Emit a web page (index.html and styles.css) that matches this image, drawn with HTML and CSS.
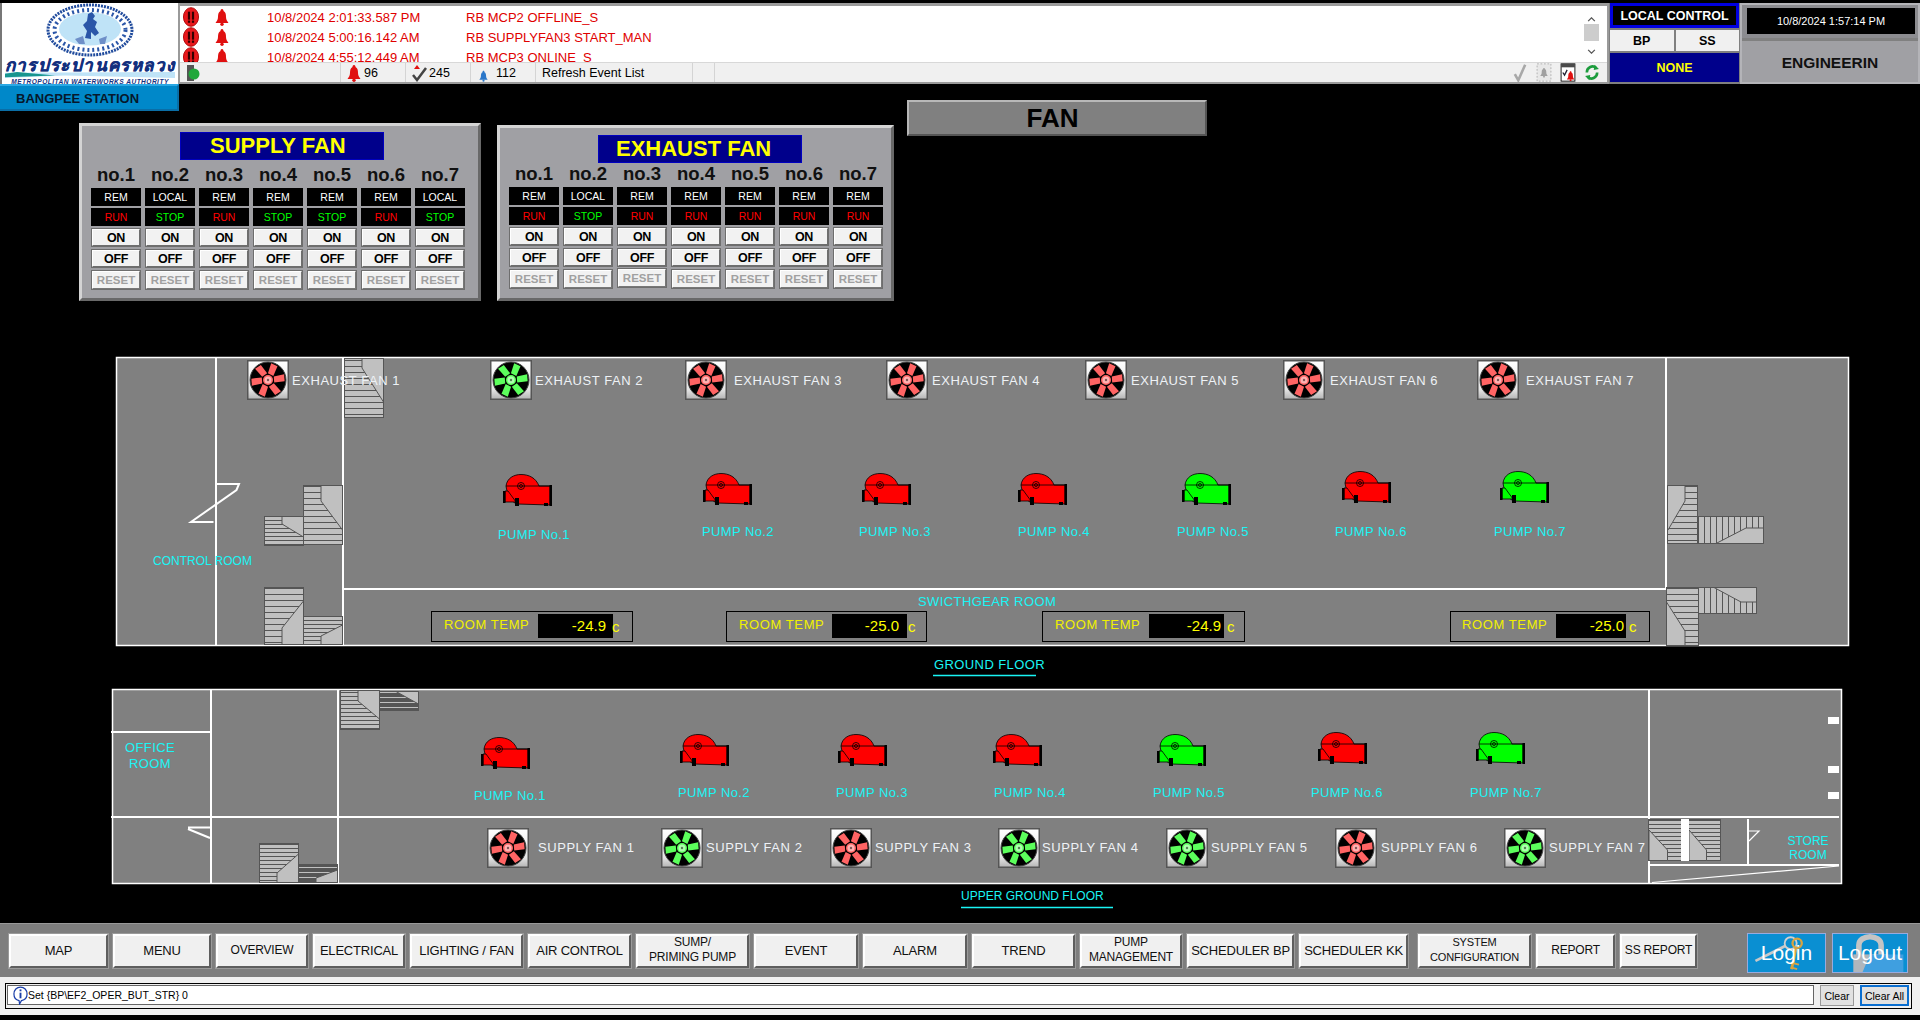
FILE: index.html
```
<!DOCTYPE html>
<html lang="en">
<head>
<meta charset="utf-8">
<title>Fan - Bangpee Station</title>
<link rel="stylesheet" href="styles.css">
</head>
<body>
<svg class="defs" width="0" height="0" aria-hidden="true">
  <defs>
    <linearGradient id="fanbg" x1="0" y1="0" x2="0" y2="1"><stop offset="0" stop-color="#ffffff"/><stop offset=".75" stop-color="#e4e4e4"/><stop offset="1" stop-color="#b4b4b4"/></linearGradient>
    <pattern id="h6" width="8" height="6" patternUnits="userSpaceOnUse"><rect width="8" height="6" fill="#c0c0c0"/><rect width="8" height="1" fill="#555"/></pattern>
    <pattern id="h4" width="8" height="4" patternUnits="userSpaceOnUse"><rect width="8" height="4" fill="#c0c0c0"/><rect width="8" height="1" fill="#555"/></pattern>
    <pattern id="v6" width="6" height="8" patternUnits="userSpaceOnUse"><rect width="6" height="8" fill="#c0c0c0"/><rect width="1" height="8" fill="#555"/></pattern>
    <pattern id="hd" width="8" height="5" patternUnits="userSpaceOnUse"><rect width="8" height="5" fill="#555"/><rect y="2" width="8" height="1" fill="#c0c0c0"/></pattern>
    <symbol id="fan" viewBox="0 0 42 40">
      <rect x=".75" y=".75" width="40.5" height="38.5" fill="url(#fanbg)" stroke="#555" stroke-width="1.5"/>
      <circle cx="21" cy="20" r="18" fill="#000" stroke="#444" stroke-width="1"/>
      <g fill="currentColor" transform="rotate(-4 21 20)">
        <polygon points="27,17 37.500,15.500 37.500,22.500 27,23"/>
        <polygon points="27,17 37.500,15.500 37.500,22.500 27,23" transform="rotate(-60 21 20)"/>
        <polygon points="27,17 37.500,15.500 37.500,22.500 27,23" transform="rotate(-120 21 20)"/>
        <polygon points="27,17 37.500,15.500 37.500,22.500 27,23" transform="rotate(180 21 20)"/>
        <polygon points="27,17 37.500,15.500 37.500,22.500 27,23" transform="rotate(120 21 20)"/>
        <polygon points="27,17 37.500,15.500 37.500,22.500 27,23" transform="rotate(60 21 20)"/>
      </g>
      <circle cx="21" cy="20" r="5" fill="currentColor"/>
      <circle cx="21" cy="20" r="3.500" fill="#fff" fill-opacity=".5"/>
      <circle cx="21" cy="20" r="1.200" fill="#000" fill-opacity=".5"/>
    </symbol>
    <symbol id="pump" viewBox="0 0 49 33">
      <path d="M3 12C4 4 11 .5 18 .5C26 .5 33 4 36 12H47V31L14 30C8 28 4 20 3 12Z" fill="currentColor" stroke="#000" stroke-width=".8"/>
      <path d="M5 17L13 28H2V17Z" fill="currentColor" stroke="#000" stroke-width=".8"/>
      <path d="M3 12H47" stroke="#000" stroke-width=".8" fill="none"/>
      <rect x="46.500" y="11" width="2.500" height="21" fill="#000"/>
      <rect y="17" width="2.500" height="12" fill="#000"/>
      <rect x="12" y="24" width="4" height="8" fill="#000"/>
      <rect x="41" y="29" width="4" height="3" fill="#000"/>
      <circle cx="18" cy="12" r="3.500" fill="none" stroke="#000" stroke-width=".8"/>
      <circle cx="18" cy="12" r="1.500" fill="none" stroke="#000" stroke-width=".8"/>
    </symbol>
    <symbol id="bell" viewBox="0 0 14 18">
      <path d="M7 1C8.200 1 8.500 2 8.500 3C10.500 4 11 6 11 9C11 12 12.500 13.500 13.500 15H.5C1.500 13.500 3 12 3 9C3 6 3.500 4 5.500 3C5.500 2 5.800 1 7 1Z" fill="currentColor"/>
      <circle cx="7" cy="16.300" r="1.700" fill="currentColor"/>
    </symbol>
    <symbol id="alert" viewBox="0 0 18 22">
      <ellipse cx="9" cy="11" rx="8.500" ry="10.500" fill="#e8181c" stroke="#a00"/>
      <rect x="5.500" y="5" width="2.500" height="9" fill="#300"/>
      <rect x="10" y="5" width="2.500" height="9" fill="#300"/>
      <rect x="5.500" y="15" width="2.500" height="2.500" fill="#300"/>
      <rect x="10" y="15" width="2.500" height="2.500" fill="#300"/>
    </symbol>
  </defs>
</svg>

<header class="topbar">
  <div class="logo">
    <svg class="seal" viewBox="0 0 90 54" aria-hidden="true">
      <ellipse cx="45" cy="27" rx="42" ry="25" class="seal-ring"/>
      <ellipse cx="45" cy="27" rx="35.500" ry="20" class="seal-dots"/>
      <ellipse cx="45" cy="26" rx="31" ry="16.500" class="seal-in"/>
      <path d="M43 11L47 9L50 13L48 16L52 19L50 24L54 30L50 33L46 29L46 36L40 35L42 28L38 22L42 18Z" class="seal-fig"/>
      <path d="M30 36L38 33L40 41L34 41ZM54 36L62 33L60 41L55 41Z" class="seal-fig-l"/>
    </svg>
    <div class="logo-th">การประปานครหลวง</div>
    <svg class="swoosh" viewBox="0 0 170 7" preserveAspectRatio="none" aria-hidden="true"><polygon points="0,1 170,0 170,7 60,4 0,7" class="sw-light"/><polygon points="0,2 12,0 50,4 0,6" class="sw-teal"/></svg>
    <div class="logo-en">METROPOLITAN WATERWORKS AUTHORITY</div>
  </div>

  <section class="events">
    <div class="event-body">
      <div class="event-list">
        <div class="event-row"><svg class="ic-alert"><use href="#alert"/></svg><svg class="ic-bell"><use href="#bell"/></svg><span class="ev-date">10/8/2024 2:01:33.587 PM</span><span>RB MCP2 OFFLINE_S</span></div>
        <div class="event-row"><svg class="ic-alert"><use href="#alert"/></svg><svg class="ic-bell"><use href="#bell"/></svg><span class="ev-date">10/8/2024 5:00:16.142 AM</span><span>RB SUPPLYFAN3 START_MAN</span></div>
        <div class="event-row"><svg class="ic-alert"><use href="#alert"/></svg><svg class="ic-bell"><use href="#bell"/></svg><span class="ev-date">10/8/2024 4:55:12.449 AM</span><span>RB MCP3 ONLINE_S</span></div>
      </div>
      <div class="scrollbar">
        <svg class="chev" viewBox="0 0 10 6"><path d="M1 5L5 1L9 5" class="chev-line"/></svg>
        <div class="thumb"></div>
        <svg class="chev chev-down" viewBox="0 0 10 6"><path d="M1 1L5 5L9 1" class="chev-line"/></svg>
      </div>
    </div>
    <div class="statusbar">
      <div class="cell cell-light"><svg class="ic-light" viewBox="0 0 14 18"><rect x="1" y="1" width="7" height="16" class="light-box"/><circle cx="8" cy="10" r="5.500" class="light-on"/></svg></div>
      <div class="cell cell-a"><svg class="ic-bell-sm red"><use href="#bell"/></svg>96</div>
      <div class="cell cell-a"><svg class="ic-ack" viewBox="0 0 16 18"><path d="M1 11L5 16L14 4" class="ack-line"/><path d="M5 1L8 5H2Z" class="ack-red"/></svg>245</div>
      <div class="cell cell-a"><svg class="ic-bell-xs blue"><use href="#bell"/></svg>112</div>
      <div class="cell cell-refresh">Refresh Event List</div>
      <div class="cell cell-gap"></div>
      <div class="tools">
        <svg class="tool" viewBox="0 0 18 22"><path d="M3 13L7 20L15 2" class="tool-check"/></svg>
        <svg class="tool tool-dash" viewBox="0 0 18 22"><rect x="1" y="1" width="16" height="20" class="tool-frame"/><use href="#bell" x="4" y="5" width="10" height="12" class="grey"/></svg>
        <svg class="tool" viewBox="0 0 18 22"><rect x="1" y="1" width="16" height="20" class="tool-win"/><rect x="1" y="1" width="16" height="4" class="tool-bar"/><path d="M3 11L5 14L8 8" class="tool-ack"/><use href="#bell" x="7" y="9" width="10" height="12" class="red"/></svg>
        <svg class="tool" viewBox="0 0 18 22"><path d="M3 11A6.500 7 0 0 1 14 6M15 11A6.500 7 0 0 1 4 16" class="tool-ref"/><path d="M12 2L17 7L11 8ZM6 20L1 15L7 14Z" class="tool-ref-a"/></svg>
      </div>
    </div>
  </section>

  <section class="control">
    <div class="ctl-title">LOCAL CONTROL</div>
    <div class="ctl-btns"><div class="ctl-btn">BP</div><div class="ctl-btn">SS</div></div>
    <div class="ctl-none">NONE</div>
  </section>

  <section class="session">
    <div class="clock-wrap"><div class="clock">10/8/2024 1:57:14 PM</div></div>
    <div class="user">ENGINEERIN</div>
  </section>
</header>

<main class="workspace">
  <div class="station">BANGPEE STATION</div>
  <div class="panels">
    <section class="panel panel-supply">
      <h2 class="panel-title">SUPPLY FAN</h2>
      <div class="fan-grid">
        <div class="no">no.1</div><div class="no">no.2</div><div class="no">no.3</div><div class="no">no.4</div><div class="no">no.5</div><div class="no">no.6</div><div class="no">no.7</div>
        <div class="mode">REM</div><div class="mode">LOCAL</div><div class="mode">REM</div><div class="mode">REM</div><div class="mode">REM</div><div class="mode">REM</div><div class="mode">LOCAL</div>
        <div class="state run">RUN</div><div class="state stop">STOP</div><div class="state run">RUN</div><div class="state stop">STOP</div><div class="state stop">STOP</div><div class="state run">RUN</div><div class="state stop">STOP</div>
        <div class="btn">ON</div><div class="btn">ON</div><div class="btn">ON</div><div class="btn">ON</div><div class="btn">ON</div><div class="btn">ON</div><div class="btn">ON</div>
        <div class="btn">OFF</div><div class="btn">OFF</div><div class="btn">OFF</div><div class="btn">OFF</div><div class="btn">OFF</div><div class="btn">OFF</div><div class="btn">OFF</div>
        <div class="btn reset">RESET</div><div class="btn reset">RESET</div><div class="btn reset">RESET</div><div class="btn reset">RESET</div><div class="btn reset">RESET</div><div class="btn reset">RESET</div><div class="btn reset">RESET</div>
      </div>
    </section>
    <section class="panel panel-exhaust">
      <h2 class="panel-title">EXHAUST FAN</h2>
      <div class="fan-grid">
        <div class="no">no.1</div><div class="no">no.2</div><div class="no">no.3</div><div class="no">no.4</div><div class="no">no.5</div><div class="no">no.6</div><div class="no">no.7</div>
        <div class="mode">REM</div><div class="mode">LOCAL</div><div class="mode">REM</div><div class="mode">REM</div><div class="mode">REM</div><div class="mode">REM</div><div class="mode">REM</div>
        <div class="state run">RUN</div><div class="state stop">STOP</div><div class="state run">RUN</div><div class="state run">RUN</div><div class="state run">RUN</div><div class="state run">RUN</div><div class="state run">RUN</div>
        <div class="btn">ON</div><div class="btn">ON</div><div class="btn">ON</div><div class="btn">ON</div><div class="btn">ON</div><div class="btn">ON</div><div class="btn">ON</div>
        <div class="btn">OFF</div><div class="btn">OFF</div><div class="btn">OFF</div><div class="btn">OFF</div><div class="btn">OFF</div><div class="btn">OFF</div><div class="btn">OFF</div>
        <div class="btn reset">RESET</div><div class="btn reset">RESET</div><div class="btn reset raised">RESET</div><div class="btn reset">RESET</div><div class="btn reset">RESET</div><div class="btn reset">RESET</div><div class="btn reset">RESET</div>
      </div>
    </section>
    <h1 class="page-title">FAN</h1>
  </div>

  <svg class="plan" viewBox="0 340 1920 583" width="1920" height="583">
    <!-- Ground floor -->
    <rect x="116.500" y="357.500" width="1732" height="288" class="floor"/>
    <path d="M216 357V646M343 357V646M343 589H1666M1666 357V589" class="wall"/>
    <polyline points="216,484 239,484 236.500,490 191,522 213.500,522" class="door"/>

    <rect x="344.500" y="358.500" width="39" height="59" fill="url(#h6)" class="stair"/><polygon points="362,358.500 383.500,358.500 383.500,402 362,368" class="land"/>
    <rect x="303.500" y="485.500" width="39" height="59" fill="url(#h6)" class="stair"/><polygon points="321,485.500 342.500,485.500 342.500,530 321,501" class="land"/>
    <rect x="264.500" y="516.500" width="39" height="29" fill="url(#h4)" class="stair"/><polygon points="282,516.500 303.500,516.500 303.500,537 282,524" class="land"/>
    <rect x="264.500" y="587.500" width="39" height="57" fill="url(#h6)" class="stair"/><polygon points="282,644.500 303.500,644.500 303.500,601 282,628" class="land"/>
    <rect x="303.500" y="616.500" width="39" height="28" fill="url(#h4)" class="stair"/><polygon points="321,644.500 342.500,644.500 342.500,625 321,636" class="land"/>
    <rect x="1667.500" y="485.500" width="30" height="58" fill="url(#h6)" class="stair"/><polygon points="1667.500,485.500 1685,485.500 1685,501 1668,530 1667.500,530" class="land"/>
    <rect x="1698.500" y="516.500" width="65" height="27" fill="url(#v6)" class="stair"/><polygon points="1763.500,528 1746,528 1716,543.500 1763.500,543.500" class="land"/>
    <rect x="1666.500" y="587.500" width="32" height="58" fill="url(#h6)" class="stair"/><polygon points="1666.500,602 1685,631 1685,645.500 1666.500,645.500" class="land"/>
    <rect x="1698.500" y="587.500" width="58" height="26" fill="url(#v6)" class="stair"/><polygon points="1714,587.500 1756.500,587.500 1756.500,602 1741,602" class="land"/>

    <use href="#fan" x="247" y="360" width="42" height="40" class="fan-run"/><text x="292" y="385" class="t-fan">EXHAUST FAN 1</text>
    <use href="#fan" x="490" y="360" width="42" height="40" class="fan-stop"/><text x="535" y="385" class="t-fan">EXHAUST FAN 2</text>
    <use href="#fan" x="685" y="360" width="42" height="40" class="fan-run"/><text x="734" y="385" class="t-fan">EXHAUST FAN 3</text>
    <use href="#fan" x="886" y="360" width="42" height="40" class="fan-run"/><text x="932" y="385" class="t-fan">EXHAUST FAN 4</text>
    <use href="#fan" x="1085" y="360" width="42" height="40" class="fan-run"/><text x="1131" y="385" class="t-fan">EXHAUST FAN 5</text>
    <use href="#fan" x="1283" y="360" width="42" height="40" class="fan-run"/><text x="1330" y="385" class="t-fan">EXHAUST FAN 6</text>
    <use href="#fan" x="1477" y="360" width="42" height="40" class="fan-run"/><text x="1526" y="385" class="t-fan">EXHAUST FAN 7</text>

    <use href="#pump" x="503" y="474" width="49" height="33" class="p-run"/><text x="498" y="539" class="t-room">PUMP No.1</text>
    <use href="#pump" x="703" y="473" width="49" height="33" class="p-run"/><text x="702" y="536" class="t-room">PUMP No.2</text>
    <use href="#pump" x="862" y="473" width="49" height="33" class="p-run"/><text x="859" y="536" class="t-room">PUMP No.3</text>
    <use href="#pump" x="1018" y="473" width="49" height="33" class="p-run"/><text x="1018" y="536" class="t-room">PUMP No.4</text>
    <use href="#pump" x="1182" y="473" width="49" height="33" class="p-stop"/><text x="1177" y="536" class="t-room">PUMP No.5</text>
    <use href="#pump" x="1342" y="471" width="49" height="33" class="p-run"/><text x="1335" y="536" class="t-room">PUMP No.6</text>
    <use href="#pump" x="1500" y="471" width="49" height="33" class="p-stop"/><text x="1494" y="536" class="t-room">PUMP No.7</text>

    <text x="153" y="565" class="t-small">CONTROL ROOM</text>
    <text x="918" y="606" class="t-room">SWICTHGEAR ROOM</text>

    <rect x="431.500" y="611.500" width="201" height="30" class="temp-box"/><text x="444" y="629" class="t-temp">ROOM TEMP</text><rect x="538" y="614" width="75" height="24" class="temp-val"/><text x="606" y="631" class="t-val">-24.9</text><text x="612" y="632" class="t-unit">c</text>
    <rect x="726.500" y="611.500" width="200" height="30" class="temp-box"/><text x="739" y="629" class="t-temp">ROOM TEMP</text><rect x="832" y="614" width="75" height="24" class="temp-val"/><text x="899" y="631" class="t-val">-25.0</text><text x="908" y="632" class="t-unit">c</text>
    <rect x="1042.500" y="611.500" width="202" height="30" class="temp-box"/><text x="1055" y="629" class="t-temp">ROOM TEMP</text><rect x="1149" y="614" width="75" height="24" class="temp-val"/><text x="1221" y="631" class="t-val">-24.9</text><text x="1227" y="632" class="t-unit">c</text>
    <rect x="1450.500" y="611.500" width="199" height="30" class="temp-box"/><text x="1462" y="629" class="t-temp">ROOM TEMP</text><rect x="1556" y="614" width="70" height="24" class="temp-val"/><text x="1624" y="631" class="t-val">-25.0</text><text x="1629" y="632" class="t-unit">c</text>

    <text x="934" y="669" class="t-room">GROUND FLOOR</text>
    <path d="M933 675.500H1036" class="underline"/>

    <!-- Upper ground floor -->
    <rect x="112.500" y="689.500" width="1729" height="194" class="floor"/>
    <path d="M211 689V884M338 689V884M111 732H211M111 817H1839M1649 689V884M1748 819V865M1649 865H1839" class="wall"/>
    <path d="M188 827.500H210M188 829L210 838" class="door"/>
    <path d="M1748 831H1759L1749 841" class="thin"/>
    <path d="M1652 882.500L1839 866" class="thin"/>
    <rect x="1828" y="717" width="11" height="7" class="sq"/><rect x="1828" y="766" width="11" height="7" class="sq"/><rect x="1828" y="792" width="11" height="7" class="sq"/>

    <rect x="340.500" y="690.500" width="39" height="39" fill="url(#h4)" class="stair"/><polygon points="358,690.500 379.500,690.500 379.500,719 358,701" class="land"/>
    <rect x="379.500" y="691.500" width="39" height="19" fill="url(#hd)" class="stair"/><polygon points="396,691.500 418.500,691.500 418.500,704" class="land"/>
    <rect x="259.500" y="843.500" width="39" height="39" fill="url(#h4)" class="stair"/><polygon points="277,882.500 298.500,882.500 298.500,854 277,873" class="land"/>
    <rect x="298.500" y="864.500" width="39" height="18" fill="url(#hd)" class="stair"/><polygon points="316,882.500 337.500,882.500 337.500,870 316,878" class="land"/>
    <rect x="1648.500" y="819.500" width="72" height="41" fill="url(#h4)" class="stair"/>
    <polygon points="1649,830 1667.500,850 1667.500,860.500 1649,860.500" class="land"/><polygon points="1689,830 1706.500,850 1706.500,860.500 1689,860.500" class="land"/>
    <rect x="1681" y="819" width="8" height="42" class="sq"/>

    <use href="#pump" x="481" y="737" width="49" height="33" class="p-run"/><text x="474" y="800" class="t-room">PUMP No.1</text>
    <use href="#pump" x="680" y="734" width="49" height="33" class="p-run"/><text x="678" y="797" class="t-room">PUMP No.2</text>
    <use href="#pump" x="838" y="734" width="49" height="33" class="p-run"/><text x="836" y="797" class="t-room">PUMP No.3</text>
    <use href="#pump" x="993" y="734" width="49" height="33" class="p-run"/><text x="994" y="797" class="t-room">PUMP No.4</text>
    <use href="#pump" x="1157" y="734" width="49" height="33" class="p-stop"/><text x="1153" y="797" class="t-room">PUMP No.5</text>
    <use href="#pump" x="1318" y="732" width="49" height="33" class="p-run"/><text x="1311" y="797" class="t-room">PUMP No.6</text>
    <use href="#pump" x="1476" y="732" width="49" height="33" class="p-stop"/><text x="1470" y="797" class="t-room">PUMP No.7</text>

    <use href="#fan" x="487" y="828" width="42" height="40" class="fan-run"/><text x="538" y="852" class="t-fan">SUPPLY FAN 1</text>
    <use href="#fan" x="661" y="828" width="42" height="40" class="fan-stop"/><text x="706" y="852" class="t-fan">SUPPLY FAN 2</text>
    <use href="#fan" x="830" y="828" width="42" height="40" class="fan-run"/><text x="875" y="852" class="t-fan">SUPPLY FAN 3</text>
    <use href="#fan" x="998" y="828" width="42" height="40" class="fan-stop"/><text x="1042" y="852" class="t-fan">SUPPLY FAN 4</text>
    <use href="#fan" x="1166" y="828" width="42" height="40" class="fan-stop"/><text x="1211" y="852" class="t-fan">SUPPLY FAN 5</text>
    <use href="#fan" x="1335" y="828" width="42" height="40" class="fan-run"/><text x="1381" y="852" class="t-fan">SUPPLY FAN 6</text>
    <use href="#fan" x="1504" y="828" width="42" height="40" class="fan-stop"/><text x="1549" y="852" class="t-fan">SUPPLY FAN 7</text>

    <text x="150" y="752" class="t-room t-mid">OFFICE</text><text x="150" y="768" class="t-room t-mid">ROOM</text>
    <text x="1808" y="845" class="t-small t-mid">STORE</text><text x="1808" y="859" class="t-small t-mid">ROOM</text>

    <text x="961" y="900" class="t-small">UPPER GROUND FLOOR</text>
    <path d="M961 907.500H1113" class="underline"/>
  </svg>
</main>

<footer class="footer">
  <nav class="navbar">
    <div class="navbtns">
      <div class="nav">MAP</div>
      <div class="nav">MENU</div>
      <div class="nav nav-s">OVERVIEW</div>
      <div class="nav">ELECTRICAL</div>
      <div class="nav">LIGHTING / FAN</div>
      <div class="nav">AIR CONTROL</div>
      <div class="nav nav-s">SUMP/<br>PRIMING PUMP</div>
      <div class="nav">EVENT</div>
      <div class="nav">ALARM</div>
      <div class="nav">TREND</div>
      <div class="nav nav-s">PUMP<br>MANAGEMENT</div>
      <div class="nav">SCHEDULER BP</div>
      <div class="nav">SCHEDULER KK</div>
      <div class="nav nav-xs nav-push">SYSTEM<br>CONFIGURATION</div>
      <div class="nav nav-s">REPORT</div>
      <div class="nav nav-s">SS REPORT</div>
    </div>
    <div class="auth">
      <div class="auth-btn auth-in">
        <svg class="auth-ic" viewBox="0 0 79 41" aria-hidden="true"><path d="M6 29L38 13" class="key-steel"/><circle cx="44" cy="10" r="6.500" class="key-ring"/><path d="M50 14L45 38" class="key-gold"/><path d="M45 31L53 33M44 36L51 38" class="key-gold-t"/><circle cx="51" cy="10" r="5" class="key-gold-r"/></svg>
        <span>Login</span>
      </div>
      <div class="auth-btn auth-out">
        <svg class="auth-ic" viewBox="0 0 76 41" aria-hidden="true"><path d="M26 24V12C26 0 50 0 50 12V24" class="lock-arc"/><rect x="20" y="22" width="36" height="19" class="lock-body"/><polygon points="38,22 74,22 74,41 30,41" class="lock-blue"/></svg>
        <span>Logout</span>
      </div>
    </div>
  </nav>
  <div class="msgbar">
    <div class="msg-inner">
      <div class="msg-input">
        <svg class="msg-ic" viewBox="0 0 16 20" aria-hidden="true"><path d="M8 1C12 1 15 4 15 8.500C15 13 12 15 9 15.500L7 19L6.500 15.500C3.500 15 1 13 1 8.500C1 4 4 1 8 1Z" class="info-b"/><rect x="7" y="3.500" width="2" height="2" class="info-i"/><rect x="7" y="7" width="2" height="6" class="info-i"/></svg>
        <span>Set {BP\EF2_OPER_BUT_STR} 0</span>
      </div>
      <div class="msg-btn">Clear</div>
      <div class="msg-btn msg-focus">Clear All</div>
    </div>
  </div>
</footer>
</body>
</html>
```
FILE: styles.css
```
* { box-sizing: border-box; }
html, body { margin: 0; padding: 0; }
body {
  width: 1920px; height: 1020px; overflow: hidden;
  background: #000; color: #000;
  font-family: "Liberation Sans", Arial, sans-serif;
  display: flex; flex-direction: column;
}
.defs { position: absolute; }

/* Top bar */
.topbar { height: 84px; padding-top: 3px; display: flex; flex: none; background: #000; }
.logo { width: 178px; background: #fff; position: relative; display: flex; flex-direction: column; align-items: center; border-left: 2px solid #777; overflow: hidden; }
.seal { width: 90px; height: 54px; flex: none; }
.seal-ring { fill: #fff; stroke: #1f4a9c; stroke-width: 3; stroke-dasharray: 2 1; }
.seal-dots { fill: none; stroke: #2a56a8; stroke-width: 4; stroke-dasharray: 2 3; }
.seal-in { fill: #bfe3f7; }
.seal-fig { fill: #2a56a8; }
.seal-fig-l { fill: #6e8fc8; }
.logo-th { font: italic 700 17px/14px "Noto Sans", "Liberation Sans", sans-serif; letter-spacing: 1.400px; color: #14307e; white-space: nowrap; height: 15px; margin-top: 1px; -webkit-text-stroke: .4px #14307e; }
.swoosh { width: 170px; height: 6px; flex: none; }
.sw-light { fill: #bfe3f7; }
.sw-teal { fill: #17958f; }
.logo-en { font: italic 700 6.600px/7px "Liberation Sans", sans-serif; letter-spacing: .45px; color: #14307e; white-space: nowrap; }

.events { width: 1431px; background: #f0f0f0; border: 2px solid #9a9a9a; border-top-width: 3px; display: flex; flex-direction: column; }
.event-body { height: 56px; display: flex; background: #fff; flex: none; }
.event-list { flex: 1; overflow: hidden; padding-top: 1px; }
.event-row { height: 20px; display: flex; align-items: center; color: #e00000; font-size: 13px; white-space: nowrap; }
.ic-alert { width: 16px; height: 20px; margin-left: 3px; flex: none; }
.ic-bell { width: 14px; height: 18px; margin-left: 16px; flex: none; color: #e01010; }
.ev-date { width: 199px; margin-left: 38px; }
.scrollbar { width: 18px; margin-right: 7px; background: #fff; display: flex; flex-direction: column; align-items: center; padding-top: 11px; }
.chev { width: 9px; height: 5px; flex: none; }
.chev-down { margin-top: 8px; }
.chev-line { fill: none; stroke: #555; stroke-width: 1.500; }
.thumb { width: 15px; height: 17px; background: #cdcdcd; margin-top: 2px; }

.statusbar { flex: 1; display: flex; font-size: 12.500px; border-top: 1px solid #d8d8d8; }
.cell { display: flex; align-items: center; height: 100%; padding-top: 1px; border-right: 1px solid #d4d4d4; white-space: nowrap; }
.cell-light { width: 161px; padding-left: 6px; }
.cell-a { width: 65px; padding-left: 6px; gap: 3px; }
.cell-refresh { width: 157px; padding-left: 6px; }
.cell-gap { width: 22px; }
.ic-light { width: 14px; height: 18px; }
.light-box { fill: #555; }
.light-on { fill: #21a83a; }
.ic-bell-sm { width: 14px; height: 18px; }
.ic-bell-xs { width: 9px; height: 12px; margin: 5px 5px 0 2px; }
.ic-ack { width: 16px; height: 18px; margin-right: -2px; }
.ack-line { fill: none; stroke: #444; stroke-width: 2.500; }
.ack-red { fill: #e01010; }
.red { color: #e01010; }
.blue { color: #2a77c9; }
.grey { color: #a0a0a0; }
.tools { flex: 1; display: flex; justify-content: flex-end; align-items: center; gap: 6px; padding-right: 6px; }
.tool { width: 18px; height: 19px; }
.tool-check { fill: none; stroke: #a8a8a8; stroke-width: 3; }
.tool-frame { fill: #e8e8e8; stroke: #aaa; stroke-dasharray: 2 2; }
.tool-win { fill: #fff; stroke: #000; }
.tool-bar { fill: #4a4a4a; }
.tool-ack { fill: none; stroke: #223; stroke-width: 1.500; }
.tool-ref { fill: none; stroke: #1c9c3c; stroke-width: 3; }
.tool-ref-a { fill: #1c9c3c; }

.control { width: 131px; margin-left: 0; background: #808080; padding: 0 1px 2px; display: flex; flex-direction: column; gap: 2px; }
.ctl-title { height: 25px; background: #000; border: 3px solid #0000e0; color: #fff; font-size: 12.500px; font-weight: 700; display: flex; align-items: center; justify-content: center; }
.ctl-btns { height: 21px; display: flex; gap: 2px; }
.ctl-btn { flex: 1; background: #f0f0f0; font-size: 12.500px; font-weight: 700; display: flex; align-items: center; justify-content: center; }
.ctl-none { flex: 1; background: #00008b; color: #ff0; font-size: 12.500px; font-weight: 700; display: flex; align-items: center; justify-content: center; }

.session { width: 180px; background: #a0a0a4; border: 2px solid #b4b4b8; display: flex; flex-direction: column; }
.clock-wrap { height: 36px; padding: 3px 3px 4px 5px; border-bottom: 3px solid #808080; background: #8c8c90; }
.clock { height: 100%; background: #000; color: #fff; font-size: 11px; display: flex; align-items: center; justify-content: center; }
.user { flex: 1; padding-top: 3px; display: flex; align-items: center; justify-content: center; font-size: 15.500px; font-weight: 700; color: #111; }

/* Workspace */
.workspace { height: 839px; flex: none; position: relative; display: flex; flex-direction: column; }
.station { position: absolute; left: 0; top: 0; width: 179px; height: 27px; background: #0088c9; border-top: 2px solid #2aa8e4; border-right: 2px solid #0a6ea6; border-bottom: 2px solid #0a6ea6; color: #06182c; font-size: 13px; font-weight: 700; padding: 1px 0 0 16px; display: flex; align-items: center; }
.panels { height: 256px; padding: 16px 0 39px 79px; display: flex; align-items: flex-end; flex: none; }
.panel { background: #a0a0a4; border: 3px solid; border-color: #d4d4d4 #696969 #696969 #d4d4d4; flex: none; }
.panel-supply { width: 402px; height: 178px; padding: 6px 0 0 9px; }
.panel-exhaust { width: 397px; height: 176px; margin-left: 16px; padding: 7px 0 0 9px; }
.panel-title { margin: 0; height: 28px; background: #00008b; border: 1px solid #0000c0; color: #ff0; font-size: 22px; font-weight: 700; line-height: 26px; }
.panel-supply .panel-title { width: 204px; margin: 0 0 4px 89px; padding-left: 29px; }
.panel-exhaust .panel-title { width: 204px; margin: 0 0 0 89px; padding-left: 17px; white-space: nowrap; }
.fan-grid { width: 374px; display: grid; grid-template-columns: repeat(7, 50px); grid-template-rows: 22px 18px 18px 19px 19px 20px; gap: 2px 4px; }
.no { font-size: 18.500px; font-weight: 700; text-align: center; line-height: 22px; color: #111; }
.mode, .state { background: #000; font-size: 10.500px; display: flex; align-items: center; justify-content: center; }
.mode { color: #fff; }
.run { color: #f00; }
.stop { color: #0f0; }
.btn { background: #f2f2f2; border: 2px solid; border-color: #fff #6e6e6e #6e6e6e #fff; outline: 1px solid #6e6e6e; outline-offset: -1px; font-size: 12.500px; font-weight: 700; letter-spacing: -.4px; display: flex; align-items: center; justify-content: center; color: #000; }
.reset { color: #a0a0a0; font-size: 11.500px; letter-spacing: 0; border-color: #fff #777 #777 #fff; }
.raised { transform: translateY(-1px); }
.page-title { margin: 0 0 0 13px; align-self: flex-start; width: 300px; height: 36px; padding-right: 9px; background: #808080; border: 2px solid; border-color: #b8b8b8 #555 #555 #b8b8b8; font-size: 26px; font-weight: 700; line-height: 32px; text-align: center; color: #000; }

/* Plan */
.plan { display: block; flex: none; }
.floor { fill: #808080; stroke: #fff; stroke-width: 1.500; }
.wall { fill: none; stroke: #fff; stroke-width: 2; }
.door { fill: none; stroke: #fff; stroke-width: 2; }
.thin { fill: none; stroke: #fff; stroke-width: 1.200; }
.sq { fill: #fff; }
.stair { stroke: #555; stroke-width: 1; }
.land { fill: #c0c0c0; stroke: #555; stroke-width: 1; }
.fan-run { color: #ff6464; }
.fan-stop { color: #5cff5c; }
.p-run { color: #f00; }
.p-stop { color: #0f0; }
.t-fan { fill: #eef2f6; font-size: 13px; letter-spacing: .55px; }
.t-room { fill: #19f5f5; font-size: 13px; letter-spacing: .4px; }
.t-small { fill: #19f5f5; font-size: 12px; }
.t-mid { text-anchor: middle; }
.temp-box { fill: none; stroke: #000; stroke-width: 1; }
.temp-val { fill: #000; }
.t-temp { fill: #f0f000; font-size: 13px; letter-spacing: .6px; }
.t-val { fill: #ff0; font-size: 15px; text-anchor: end; }
.t-unit { fill: #ff0; font-size: 15px; }
.underline { fill: none; stroke: #19f5f5; stroke-width: 1.500; }

/* Footer */
.footer { flex: 1; display: flex; flex-direction: column; background: #000; }
.navbar { height: 54px; background: #7e7e7e; border-top: 1px solid #999; padding: 10px 12px 0 9px; display: flex; flex: none; }
.navbtns { display: grid; grid-template-columns: 99px 98px 92px 92px 113px 103px 113px 104px 104px 103px 102px 107px 109px 118px 79px 77px; column-gap: 5px; grid-template-rows: 34px; }
.nav { background: #f0f0f0; border: 2px solid; border-color: #fff #5e5e5e #5e5e5e #fff; outline: 1px solid #9a9a9a; padding-bottom: 2px; font-size: 13px; line-height: 15px; text-align: center; display: flex; align-items: center; justify-content: center; white-space: nowrap; letter-spacing: -.2px; color: #111; }
.nav-s { font-size: 12px; }
.nav-xs { font-size: 11px; }
.nav-push { margin-left: 5px; }
.auth { margin-left: auto; display: flex; gap: 6px; margin-top: -1px; }
.auth-btn { height: 40px; background: #0a8fd2; border: 1px solid #9ad; position: relative; color: #fff; font-size: 21px; display: flex; align-items: center; justify-content: center; overflow: hidden; }
.auth-in { width: 79px; }
.auth-out { width: 76px; }
.auth-btn span { position: relative; }
.auth-ic { position: absolute; inset: 0; width: 100%; height: 100%; }
.key-steel { fill: none; stroke: #c8c8c8; stroke-width: 3; }
.key-ring { fill: none; stroke: #d0d0d0; stroke-width: 2; }
.key-gold { fill: none; stroke: #d9a441; stroke-width: 3; }
.key-gold-t { fill: none; stroke: #d9a441; stroke-width: 2; }
.key-gold-r { fill: none; stroke: #d9a441; stroke-width: 2.500; }
.lock-arc { fill: none; stroke: #c4c4c4; stroke-width: 6; }
.lock-body { fill: #b0b6bc; }
.lock-blue { fill: #3f9fe0; }
.msgbar { flex: none; height: 38px; padding: 6px 8px 0 5px; background: #f0f0f0; }
.msg-inner { height: 26px; border: 1px solid #000; background: #f0f0f0; display: flex; align-items: flex-start; gap: 6px; padding: 1px 2px 0 1px; }
.msg-input { width: 1808px; height: 20px; background: #fff; border: 1px solid #666; display: flex; align-items: center; gap: 0; padding-left: 5px; font-size: 10.500px; }
.msg-ic { width: 15px; height: 19px; flex: none; }
.info-b { fill: #fff; stroke: #1a3ea8; stroke-width: 1.300; }
.info-i { fill: #1a3ea8; }
.msg-btn { height: 21px; padding: 0 3px; min-width: 34px; background: #e1e1e1; border: 1px solid #999; font-size: 10.500px; display: flex; align-items: center; justify-content: center; white-space: nowrap; }
.msg-focus { width: 49px; flex: none; border: 2px solid #0a6ed0; }
```
